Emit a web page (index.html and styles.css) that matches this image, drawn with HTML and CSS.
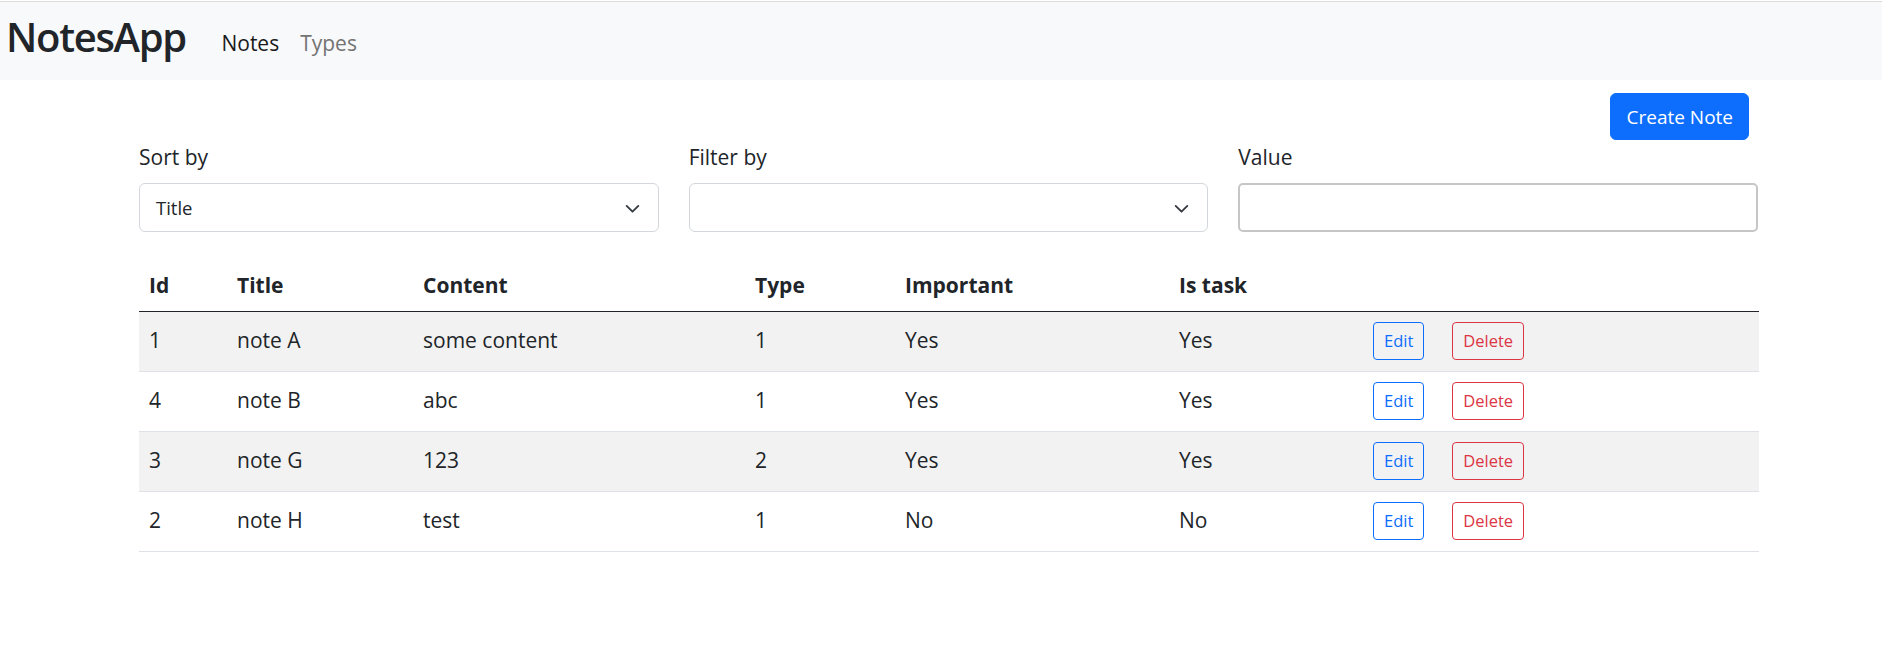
FILE: index.html
```html
<!DOCTYPE html>
<html lang="en">
<head>
<meta charset="utf-8">
<title>NotesApp</title>
<link rel="stylesheet" href="styles.css">
</head>
<body>
<nav class="navbar">
  <a class="brand" href="#">NotesApp</a>
  <ul class="nav-links">
    <li><a class="nav-link active" href="#">Notes</a></li>
    <li><a class="nav-link" href="#">Types</a></li>
  </ul>
</nav>
<main class="container">
  <div class="toolbar">
    <button class="btn btn-primary" type="button">Create Note</button>
  </div>
  <div class="filters">
    <div class="field">
      <label class="field-label">Sort by</label>
      <div class="select-box">
        <span class="select-value">Title</span>
        <svg class="chevron" viewBox="0 0 16 16" width="16" height="16" aria-hidden="true"><path d="M2.5 5.5 8 11l5.5-5.5" fill="none" stroke="#343a40" stroke-width="1.7" stroke-linecap="round" stroke-linejoin="round"/></svg>
      </div>
    </div>
    <div class="field">
      <label class="field-label">Filter by</label>
      <div class="select-box">
        <span class="select-value"></span>
        <svg class="chevron" viewBox="0 0 16 16" width="16" height="16" aria-hidden="true"><path d="M2.5 5.5 8 11l5.5-5.5" fill="none" stroke="#343a40" stroke-width="1.7" stroke-linecap="round" stroke-linejoin="round"/></svg>
      </div>
    </div>
    <div class="field">
      <label class="field-label">Value</label>
      <input class="text-input" type="text">
    </div>
  </div>
  <table class="notes-table">
    <colgroup>
      <col class="c-id"><col class="c-title"><col class="c-content"><col class="c-type"><col class="c-imp"><col class="c-task"><col class="c-actions">
    </colgroup>
    <thead>
      <tr><th>Id</th><th>Title</th><th>Content</th><th>Type</th><th>Important</th><th>Is task</th><th></th></tr>
    </thead>
    <tbody>
      <tr class="striped"><td>1</td><td>note A</td><td>some content</td><td>1</td><td>Yes</td><td>Yes</td><td><div class="actions"><button class="btn-sm btn-edit">Edit</button><button class="btn-sm btn-delete">Delete</button></div></td></tr>
      <tr><td>4</td><td>note B</td><td>abc</td><td>1</td><td>Yes</td><td>Yes</td><td><div class="actions"><button class="btn-sm btn-edit">Edit</button><button class="btn-sm btn-delete">Delete</button></div></td></tr>
      <tr class="striped"><td>3</td><td>note G</td><td>123</td><td>2</td><td>Yes</td><td>Yes</td><td><div class="actions"><button class="btn-sm btn-edit">Edit</button><button class="btn-sm btn-delete">Delete</button></div></td></tr>
      <tr><td>2</td><td>note H</td><td>test</td><td>1</td><td>No</td><td>No</td><td><div class="actions"><button class="btn-sm btn-edit">Edit</button><button class="btn-sm btn-delete">Delete</button></div></td></tr>
    </tbody>
  </table>
</main>
</body>
</html>
```
FILE: styles.css
```css
* { box-sizing: border-box; }
html, body { margin: 0; padding: 0; background: #fff; }
body {
  font-family: "Open Sans", "Noto Sans", sans-serif;
  color: #212529;
  font-size: 21px;
}
.navbar {
  margin-top: 1px;
  border-top: 1px solid #dcdcdc;
  background: #f8f9fa;
  height: 79px;
  display: flex;
  align-items: flex-start;
  padding: 11px 0 0 6px;
}
.brand {
  font-size: 40px;
  font-weight: 600;
  letter-spacing: -1.3px;
  line-height: 48px;
  color: #212529;
  text-decoration: none;
}
.nav-links {
  list-style: none;
  display: flex;
  margin: 14px 0 0 25px;
  padding: 0;
}
.nav-link {
  display: block;
  font-size: 21px;
  line-height: 32px;
  padding: 0 10.5px;
  color: #737373;
  text-decoration: none;
}
.nav-link.active { color: #1a1a1a; }
.container {
  padding: 0 124px 0 139px;
}
.toolbar {
  display: flex;
  justify-content: flex-end;
  margin-top: 13px;
  padding-right: 9px;
}
.btn {
  font-family: inherit;
  border: 1px solid transparent;
  border-radius: 6px;
  font-size: 19px;
  height: 47px;
  padding: 0 15px;
  cursor: pointer;
}
.btn-primary { background: #0d6efd; border-color: #0d6efd; color: #fff; }
.filters {
  display: grid;
  grid-template-columns: repeat(3, 1fr);
  column-gap: 30px;
  margin-top: 1px;
}
.field { display: flex; flex-direction: column; }
.field-label {
  font-size: 21px;
  line-height: 32px;
  margin-bottom: 10px;
}
.select-box {
  height: 49px;
  border: 1px solid #d3d6da;
  border-radius: 6px;
  display: flex;
  align-items: center;
  justify-content: space-between;
  padding: 0 17px 0 16px;
  font-size: 18.5px;
  background: #fff;
}
.select-value { line-height: 28px; }
.chevron { width: 17px; height: 17px; margin-top: 2px; }
.text-input {
  height: 49px;
  border: 2px solid #c6c6c6;
  border-radius: 5px;
  font-family: inherit;
  font-size: 18.5px;
  padding: 0 14px;
  outline: none;
}
.notes-table {
  width: 1620px;
  margin-top: 28px;
  border-collapse: collapse;
  table-layout: fixed;
}
.c-id { width: 88px; }
.c-title { width: 186px; }
.c-content { width: 332px; }
.c-type { width: 150px; }
.c-imp { width: 274px; }
.c-task { width: 194px; }
.c-actions { width: 396px; }
.notes-table th {
  text-align: left;
  font-weight: 700;
  font-size: 21px;
  line-height: 31px;
  padding: 10px 10px;
  border-bottom: 1px solid #212529;
}
.notes-table td {
  font-size: 21px;
  line-height: 31px;
  padding: 9.5px 10px 11.5px;
  height: 60px;
  border-bottom: 1px solid #dee2e6;
  vertical-align: middle;
}
.notes-table tr.striped td { background: #f2f2f2; }
.actions { display: flex; gap: 28px; }
.btn-sm {
  font-family: inherit;
  font-size: 16.5px;
  height: 38px;
  padding: 0 10px;
  border-radius: 4px;
  background: transparent;
  cursor: pointer;
}
.btn-edit { border: 1px solid #0d6efd; color: #0d6efd; }
.btn-delete { border: 1px solid #dc3545; color: #dc3545; }
```
